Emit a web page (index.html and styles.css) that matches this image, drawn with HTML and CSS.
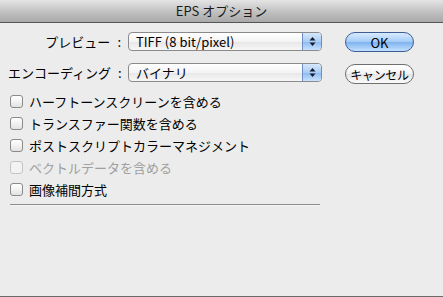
FILE: index.html
```html
<!DOCTYPE html>
<html lang="ja">
<head>
  <meta charset="UTF-8">
  <meta name="viewport" content="width=device-width, initial-scale=1.0">
  <title>EPS オプション</title>
  <link rel="stylesheet" href="styles.css">
</head>
<body>
  <div class="window">
    <div class="titlebar">EPS オプション</div>
    <div class="main">
      <div class="left">
        <div class="field">
          <span class="label">プレビュー<span class="colon">:</span></span>
          <div class="popup">
            <span class="popup-text">TIFF (8 bit/pixel)</span>
            <span class="arrows">
              <svg width="7" height="11" viewBox="0 0 7 11"><path d="M3.5 1 L6.5 4.5 L0.5 4.5 Z M3.5 10 L6.5 6.5 L0.5 6.5 Z" fill="#1a1a2a"/></svg>
            </span>
          </div>
        </div>
        <div class="field">
          <span class="label">エンコーディング<span class="colon">:</span></span>
          <div class="popup">
            <span class="popup-text">バイナリ</span>
            <span class="arrows">
              <svg width="7" height="11" viewBox="0 0 7 11"><path d="M3.5 1 L6.5 4.5 L0.5 4.5 Z M3.5 10 L6.5 6.5 L0.5 6.5 Z" fill="#1a1a2a"/></svg>
            </span>
          </div>
        </div>
        <div class="checks">
          <label class="check"><span class="box"></span>ハーフトーンスクリーンを含める</label>
          <label class="check"><span class="box"></span>トランスファー関数を含める</label>
          <label class="check"><span class="box"></span>ポストスクリプトカラーマネジメント</label>
          <label class="check disabled"><span class="box"></span>ベクトルデータを含める</label>
          <label class="check"><span class="box"></span>画像補間方式</label>
        </div>
        <div class="separator"></div>
      </div>
      <div class="buttons">
        <button class="btn btn-default">OK</button>
        <button class="btn btn-cancel">キャンセル</button>
      </div>
    </div>
  </div>
</body>
</html>
```

FILE: styles.css
```css
body {
  margin: 0;
  padding: 0;
  font-family: "Noto Sans CJK JP", "DejaVu Sans", sans-serif;
  font-size: 13px;
  color: #000;
  background-color: #ececec;
}
.window {
  width: 443px;
  height: 297px;
  box-sizing: border-box;
  background-color: #ececec;
  border-bottom: 1px solid #6a6a6a;
}
.titlebar {
  height: 22px;
  line-height: 22px;
  text-align: center;
  font-size: 13px;
  color: #1a1a1a;
  background: linear-gradient(#e4e4e4, #bdbdbd 60%, #a9a9a9);
  border-bottom: 1px solid #555;
}
.main {
  display: flex;
  padding: 9px 0 0 8px;
}
.left {
  width: 314px;
}
.field {
  display: flex;
  align-items: center;
  height: 19px;
  margin-bottom: 12px;
}
.label {
  width: 116px;
  text-align: right;
  margin-right: 4px;
  white-space: nowrap;
}
.colon {
  margin: 0 3px 0 7px;
}
.popup {
  display: flex;
  width: 194px;
  height: 19px;
  box-sizing: border-box;
  border: 1px solid #8a8a8a;
  border-radius: 4px;
  background: linear-gradient(#ffffff, #f4f4f4 50%, #e6e6e6 51%, #f7f7f7);
  overflow: hidden;
}
.popup-text {
  flex: 1;
  padding-left: 7px;
  line-height: 17px;
}
.arrows {
  width: 18px;
  display: flex;
  align-items: center;
  justify-content: center;
  border-left: 1px solid #6f8fc4;
  background: linear-gradient(#d6e8fc, #a9cdf5 50%, #8ab9ef 51%, #c7e2ff);
}
.checks {
  margin-top: -4px;
  margin-left: 2px;
}
.check {
  display: flex;
  align-items: center;
  height: 22px;
  white-space: nowrap;
}
.box {
  width: 13px;
  height: 13px;
  box-sizing: border-box;
  border: 1px solid #8a8a8a;
  border-radius: 3px;
  background: linear-gradient(#ffffff, #f2f2f2 50%, #e2e2e2);
  margin-right: 6px;
}
.check.disabled {
  color: #a0a0a0;
}
.check.disabled .box {
  border-color: #c4c4c4;
  background: #f3f3f3;
}
.separator {
  margin: 4px 0 0 2px;
  width: 310px;
  height: 1px;
  background-color: #8c8c8c;
  border-bottom: 1px solid #f6f6f6;
}
.buttons {
  display: flex;
  flex-direction: column;
  margin-left: 23px;
}
.btn {
  width: 69px;
  height: 20px;
  margin: 0 0 12px 0;
  padding: 0;
  font-family: inherit;
  font-size: 13px;
  color: #000;
  border: 1px solid #6f6f6f;
  border-radius: 10px;
  background: linear-gradient(#ffffff, #f3f3f3 50%, #e4e4e4 51%, #fbfbfb);
}
.btn-cancel {
  font-size: 12px;
  letter-spacing: -0.3px;
}
.btn-default {
  border-color: #3c5d95;
  background: linear-gradient(#d9ebff, #a3cbf7 50%, #7fb2ef 51%, #c2e1ff);
}
```
